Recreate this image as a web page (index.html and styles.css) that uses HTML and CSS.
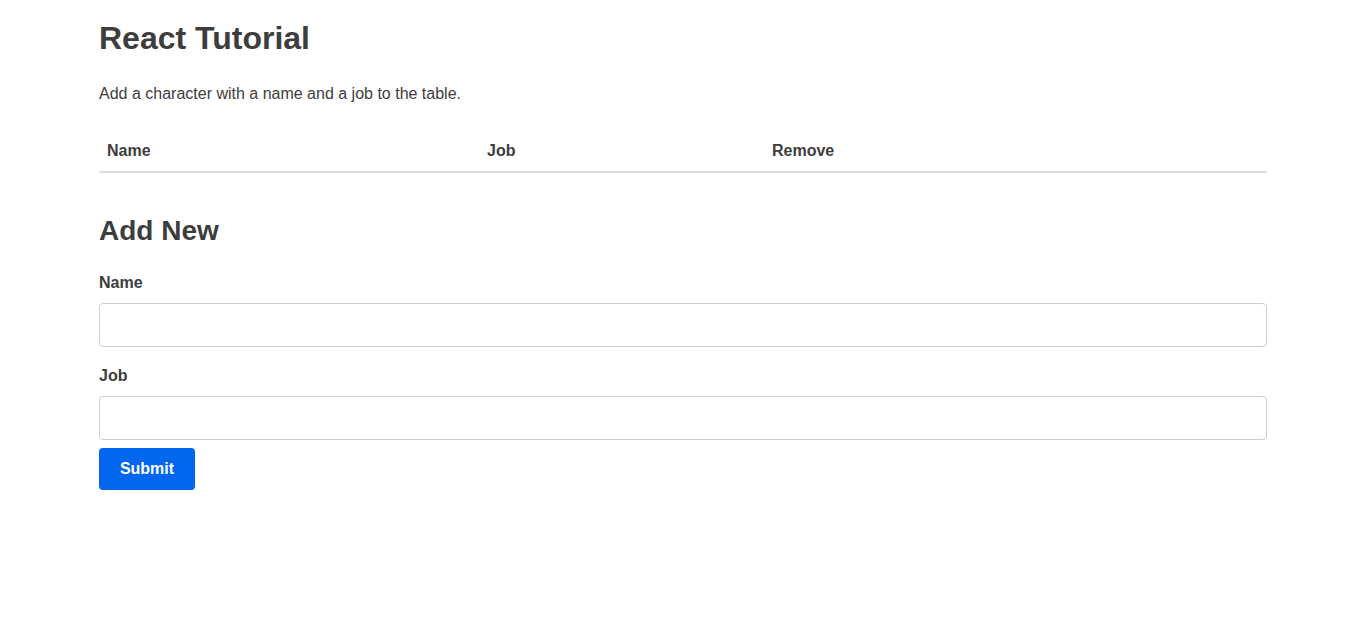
FILE: index.html
```html
<!DOCTYPE html>
<html>
<head>
<meta charset="utf-8">
<link rel="stylesheet" href="styles.css">
</head>
<body>
<div class="container">
  <h1 class="title">React Tutorial</h1>
  <p class="intro">Add a character with a name and a job to the table.</p>
  <table class="chars">
    <thead>
      <tr>
        <th class="col-name">Name</th>
        <th class="col-job">Job</th>
        <th class="col-remove">Remove</th>
      </tr>
    </thead>
    <tbody></tbody>
  </table>
  <h2 class="subtitle">Add New</h2>
  <form class="form">
    <label class="label" for="name">Name</label>
    <input class="input" type="text" id="name" name="name">
    <label class="label" for="job">Job</label>
    <input class="input input-last" type="text" id="job" name="job">
    <button class="button" type="button">Submit</button>
  </form>
</div>
</body>
</html>
```
FILE: styles.css
```css
html, body {
  margin: 0;
  padding: 0;
  background: #fff;
}
body {
  font-family: "Liberation Sans", Arial, sans-serif;
  color: #3d3d3d;
  font-size: 16px;
}
.container {
  width: 1168px;
  margin-left: 99px;
  padding-top: 16px;
}
.title {
  font-size: 32px;
  line-height: 44px;
  font-weight: 700;
  margin: 0 0 22px 0;
}
.intro {
  margin: 0 0 27px 0;
  line-height: 24px;
}
.chars {
  width: 100%;
  border-collapse: collapse;
  margin-bottom: 40px;
}
.chars th {
  text-align: left;
  font-weight: 700;
  padding: 8px 8px 10px 8px;
  line-height: 20px;
  border-bottom: 2px solid #dcdcdc;
}
.col-name { width: 364px; }
.col-job { width: 269px; }
.subtitle {
  font-size: 28px;
  line-height: 36px;
  font-weight: 700;
  margin: 0 0 24px 0;
}
.form {
  display: flex;
  flex-direction: column;
  align-items: flex-start;
}
.label {
  font-weight: 700;
  line-height: 20px;
  margin-bottom: 10px;
}
.input {
  box-sizing: border-box;
  width: 100%;
  height: 44px;
  border: 1px solid #cfcfcf;
  border-radius: 4px;
  margin: 0 0 19px 0;
  font-family: inherit;
  font-size: 16px;
  padding: 0 12px;
}
.input-last { margin-bottom: 8px; }
.button {
  width: 96px;
  height: 42px;
  background: #0366ee;
  color: #fff;
  border: 0;
  border-radius: 4px;
  font-family: inherit;
  font-size: 16px;
  font-weight: 700;
}
```
